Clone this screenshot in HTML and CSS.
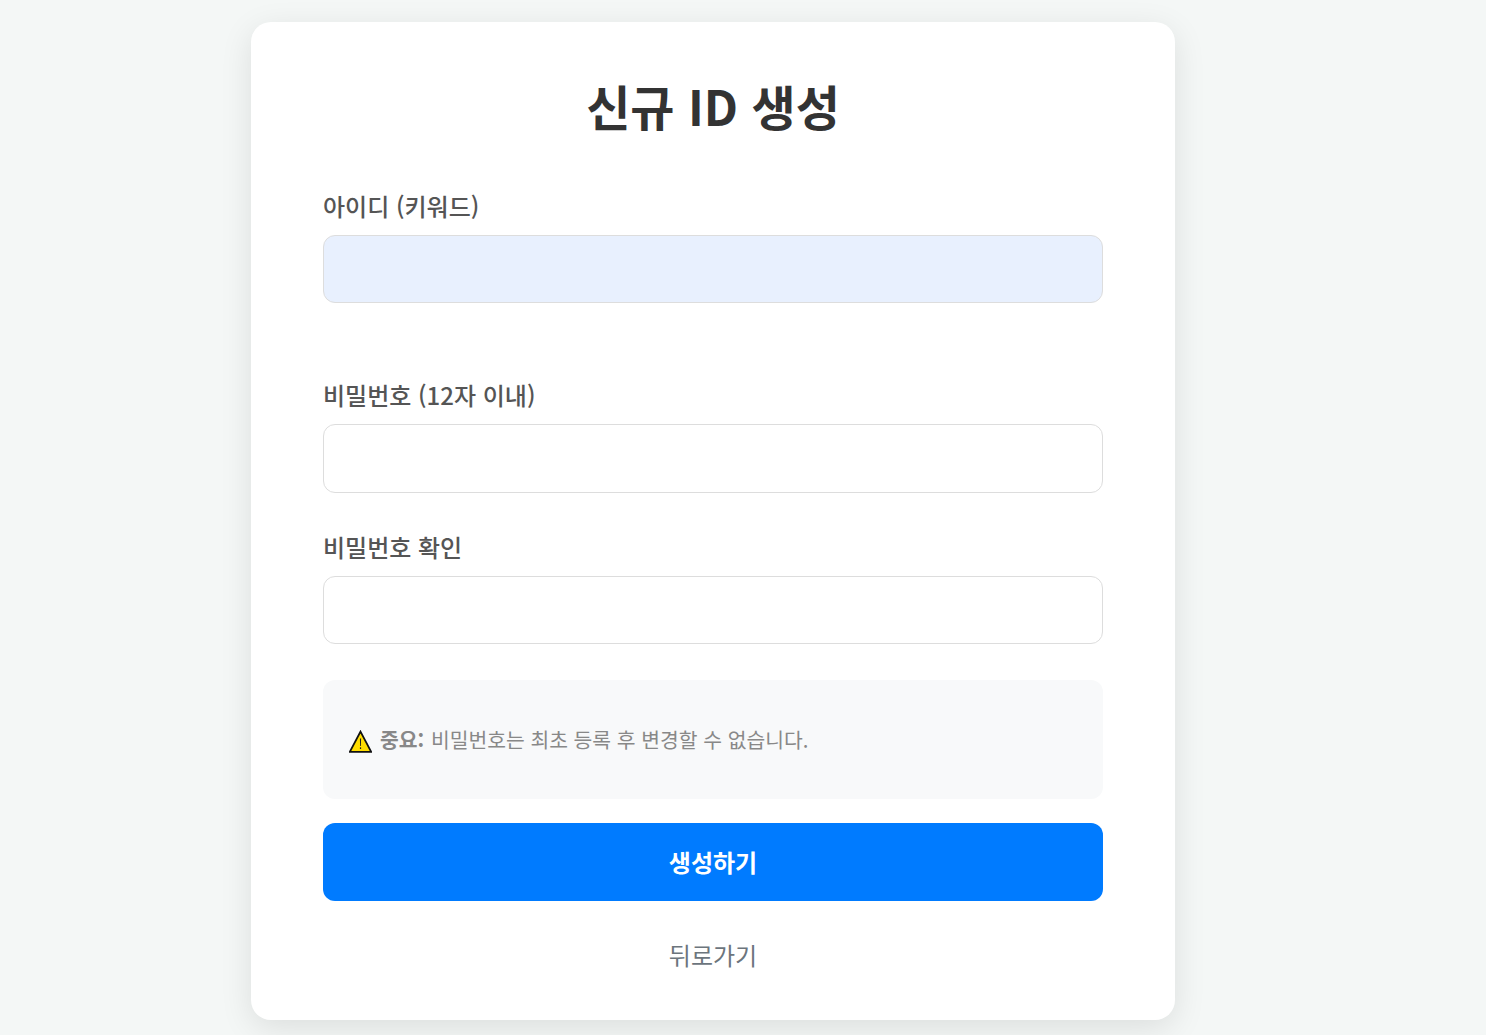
FILE: index.html
```html
<!DOCTYPE html>
<html lang="ko">
<head>
  <meta charset="UTF-8">
  <meta name="viewport" content="width=device-width, initial-scale=1.0">
  <title>신규 ID 생성</title>
  <link rel="stylesheet" href="styles.css">
</head>
<body>

  <div class="container">
    <h1>신규 ID 생성</h1>

    <form class="signup-form">
      <!-- ID -->
      <div class="field field-id">
        <label for="userId">아이디 (키워드)</label>
        <input type="text" id="userId" class="autofilled">
      </div>

      <!-- Password -->
      <div class="field field-pw">
        <label for="password">비밀번호 (12자 이내)</label>
        <input type="password" id="password">
      </div>

      <div class="field">
        <label for="passwordConfirm">비밀번호 확인</label>
        <input type="password" id="passwordConfirm">
      </div>

      <!-- Notice -->
      <div class="notice">
        <svg class="notice-icon" viewBox="0 0 23 23" width="23" height="23" aria-hidden="true">
          <path d="M11.5 1.6 L22.2 21.9 H0.8 Z" fill="#ffdd00" stroke="#111" stroke-width="1.8" stroke-linejoin="miter"/>
          <path d="M10.9 8.4 H12.1 L11.9 16 H11.1 Z" fill="#222"/>
          <rect x="10.9" y="17.3" width="1.2" height="1.7" fill="#222"/>
        </svg>
        <p><strong>중요:</strong> 비밀번호는 최초 등록 후 변경할 수 없습니다.</p>
      </div>

      <button type="button" class="submit-btn">생성하기</button>
    </form>

    <a class="back-link" href="#">뒤로가기</a>
  </div>

</body>
</html>
```

FILE: styles.css
```css
/* General Page Styles */
body {
  font-family: "Noto Sans CJK KR", "Noto Sans", sans-serif;
  background-color: #f4f7f6;
  color: #333;
  margin: 0;
  padding: 22px 0 15px 251px;
}

/* Main Container Styles */
.container {
  box-sizing: border-box;
  background-color: #ffffff;
  border-radius: 20px;
  box-shadow: 0 8px 32px rgba(0, 0, 0, 0.1);
  width: 924px;
  height: 998px;
  padding: 47px 72px 0;
}

h1 {
  color: #333;
  margin: 0 0 47px;
  font-size: 48px;
  font-weight: 700;
  line-height: 72px;
  text-align: center;
}

/* Form Styles */
.field {
  margin-bottom: 36px;
}

.field-id {
  margin-bottom: 74px;
}

label {
  display: block;
  color: #555;
  font-size: 24px;
  font-weight: 500;
  line-height: 36px;
  margin-bottom: 11px;
}

input[type="text"], input[type="password"] {
  display: block;
  box-sizing: border-box;
  width: 100%;
  height: 68px;
  border: 1px solid #dddddd;
  border-radius: 12px;
  background-color: #fff;
  outline: none;
}

.field-pw input {
  height: 69px;
}

input.autofilled {
  background-color: #e8f0fe;
}

/* Notice */
.notice {
  display: flex;
  align-items: center;
  gap: 8px;
  height: 119px;
  box-sizing: border-box;
  padding: 0 24px 2px 26px;
  margin-bottom: 24px;
  background-color: #f8f9fa;
  border-radius: 12px;
  color: #888;
  font-size: 20.4px;
}

.notice p {
  margin: 0;
}

.notice strong {
  margin-right: 1px;
}

.notice-icon {
  flex: none;
  margin-top: 5px;
}

/* Buttons */
.submit-btn {
  display: block;
  width: 100%;
  height: 78px;
  padding: 0 0 2px;
  background-color: #007bff;
  color: white;
  border: none;
  border-radius: 12px;
  font-family: inherit;
  font-size: 24px;
  font-weight: 700;
  cursor: pointer;
}

.back-link {
  display: block;
  margin-top: 36px;
  color: #6c757d;
  font-size: 24px;
  line-height: 36px;
  text-align: center;
  text-decoration: none;
}
```
